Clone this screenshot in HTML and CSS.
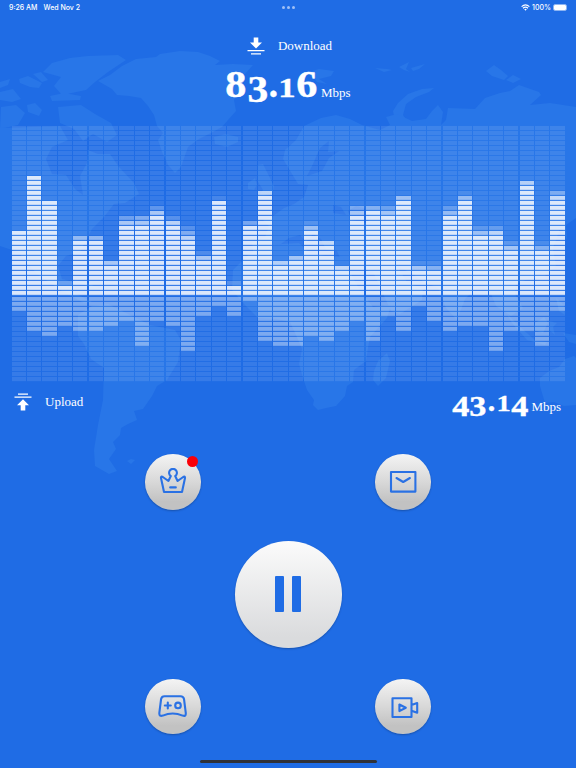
FILE: index.html
```html
<!DOCTYPE html>
<html lang="en">
<head>
    <meta charset="UTF-8">
    <meta name="viewport" content="width=device-width, initial-scale=1.0">
    <title>Speed Test</title>
    <link rel="stylesheet" href="styles.css">
</head>
<body>
    <svg class="map" viewBox="0 0 576 768">
        <!-- canadian arctic -->
        <path d="M0 82l10-3-2 6-8 3zM0 92l13-3 8 10-9 3-12-2zM19 79l9-3 14 7-3 5-9-1-10-4zM33 74l8-2 7 8-6 2zM43 72l9-9 18-5 18-2 30-1 8 5-18 12-13 10-9 8-24 5-8-9 7-9zM50 96l14-3 17 3-1 4-28 1zM1 107l15-2 9 8-7 12-18 4zM27 105l8-2 7 7-3 6-11-4zM58 107l23-2 14 9 16 9 6 12-10 7-14-8-10 7-9-12-14-6z"/>
        <!-- north america -->
        <path d="M0 128L60 126 68 140 52 147 46 159 52 174 66 175 75 189 83 195 80 176 87 163 88 150 98 154 110 154 119 167 134 183 139 194 125 203 114 204 104 217 92 229 86 241 80 252 66 256 58 266 62 279 74 282 73 292 92 302 84 303 60 290 36 273 18 252 0 246Z"/>
        <!-- greenland -->
        <path d="M98 81l12-6 12-9 14-7 20-2 4-3 20-3 18 1 12 4 10 5-5 4 18-1 20 1-8 9-8 4 2 12-5 10 2 11-8 9-6 7-11 6-12 6-11 8-7 20-6 6-7-8-6-13-4-12 5-7-6-7-3-11-6-9-7-8-12-2-12-1-5-6z"/>
        <!-- south america -->
        <path d="M78 315L92 306 108 304 130 315 150 325 175 330 181 340 178 362 167 380 157 386 152 396 143 409 134 411 137 420 128 424 121 428 120 435 113 442 116 449 109 459 117 471 109 474 95 466 94 450 98 425 103 400 104 368 91 359 84 344 78 336Z"/>
        <path d="M127 461l4-2 4 1-4 4zM74 280l14 3 12 6-11-2z"/>
        <!-- iceland and the northern islands -->
        <path d="M214 137l12-3 12 3 0 5-11 5-12-3zM309 72l10-3 15 2-3 5-12 3 8 5-10-2zM375 68l12 1 5 1-8 2zM399 67l10-5-3 7 4 3-6-2zM411 68l14-4-6 5-6 2z"/>
        <path d="M393 111l5-8 10-9 14-5 12-1-5 4-13 5-10 7-3 11 4 6-9-2-4-3zM486 71l8-6 7 5 7 6-4 4-12-4zM506 80l7-5 8 4-8 4z"/>
        <!-- europe and asia -->
        <path d="M283 159L285 150 296 140 304 126 321 118 336 115 350 119 362 125 380 130 390 125 386 117 397 114 412 121 426 119 432 111 438 105 443 112 441 125 446 120 448 108 475 109 485 98 500 93 510 91 519 85 539 92 541 95 530 105 550 103 576 107V218L566 225 567 240 561 226 553 248 556 266 544 277 528 279 516 284 515 294 523 308 511 316 496 306 491 294 483 286 474 290 465 299 457 320 446 308 438 288 424 282 411 273 397 266 407 282 423 289 422 300 400 314 391 311 380 287 373 272 362 269 348 267 341 260 337 251 326 250 321 239 313 234 306 242 300 235 289 238 277 247 268 260 254 258 252 243 265 237 269 226 263 220 273 216 284 208 294 204 304 197 308 185 298 184Z"/>
        <path d="M258 165l5-1 4 8 7 14-2 9-15 2 6-7-5-8zM248 183l7-5 2 7-3 5-6-1z"/>
        <!-- africa -->
        <path d="M248 255L262 248 282 244 299 243 310 253 326 256 343 257 351 274 361 292 373 307 391 305 387 318 370 337 368 348 366 361 354 370 353 382 347 386 345 396 336 406 326 408 318 410 313 405 314 400 307 390 303 378 299 364 302 349 296 335 290 322 277 319 258 318 245 305 232 290 233 270Z"/>
        <path d="M374 371l4-10 9-8 3 8-4 17-8 8-5-6z"/>
        <!-- oceania -->
        <path d="M540 378l9-7 10-4 6-8 9-3 2 2v47l-12 1-10-4-9 1-5-17zM507 314l12 12 17 15 11 1-2 3-18-5-15-17zM535 323l9-6 4 6-5 10-9-3zM549 321l8 2-4 4 2 8-6-5zM563 333l13 2v9l-7-2zM556 298l8 7 1 10-6-4z"/>
        <path class="sea" d="M307 176l6-12 7-16 9-7-1 11 11-1-10 7-7 13zM348 211l8-5 8 2 7 10-5 5-14-3zM333 205l8 2 5 8-13-2z"/>
    </svg>

    <div class="screen">
        <header class="status">
            <div class="status-left"><span>9:26 AM</span><span>Wed Nov 2</span></div>
            <div class="dots"><i></i><i></i><i></i></div>
            <div class="status-right">
                <svg width="9" height="7" viewBox="0 0 9 7" fill="none" stroke="#fff" stroke-width="1.2">
                    <path d="M.6 2.6Q4.5-.9 8.4 2.6M2 4.2Q4.5 2 7 4.2"/>
                    <path d="M3.2 5.2Q4.5 4.2 5.8 5.2L4.5 6.7Z" fill="#fff" stroke="none"/>
                </svg>
                <span>100%</span>
                <div class="battery"><b></b></div>
            </div>
        </header>

        <section class="download">
            <div class="label">
                <svg width="18" height="18" viewBox="0 0 18 18" fill="#fff">
                    <path d="M6.7 .5h4.6v5H15L9 11.5 3 5.5h3.7zM.5 13h17v1.3H.5zM4 16.2h10v1.3H4z"/>
                </svg>
                <span>Download</span>
            </div>
            <div class="speed">
                <div class="number"><span>8</span><span class="low">3</span><span class="dot">.</span><span class="small">1</span><span>6</span></div>
                <span class="unit">Mbps</span>
            </div>
        </section>

        <div class="chart" id="chart"></div>

        <section class="upload">
            <div class="label">
                <svg width="18" height="18" viewBox="0 0 18 18" fill="#fff">
                    <path d="M4 .5h10v1.3H4zM.5 3.5h17v1.3H.5zM9 6.3l6 6h-3.7V17.500H6.700v-5.200H3z"/>
                </svg>
                <span>Upload</span>
            </div>
            <div class="speed">
                <div class="number"><span class="low">4</span><span class="low">3</span><span class="dot">.</span><span class="small">1</span><span class="low">4</span></div>
                <span class="unit">Mbps</span>
            </div>
        </section>

        <main class="controls">
            <div class="row">
                <button class="round" aria-label="Premium">
                    <svg width="28" height="28" viewBox="0 0 28 28">
                        <path d="M5 24L2 10Q1.900 8 3.800 9L9.400 13 11.800 8A3.900 3.900 0 1 1 16.200 8L18.600 13 24.200 9Q26.100 8 26 10L23 24ZM11.200 19.400h5.600"/>
                    </svg>
                    <span class="badge"></span>
                </button>
                <button class="round" aria-label="Mail">
                    <svg width="28" height="28" viewBox="0 0 28 28">
                        <path d="M2 4h24.400v19.600H2zM7.500 10l6.700 4 6.700-4"/>
                    </svg>
                </button>
            </div>
            <button class="pause" aria-label="Pause"><i></i><i></i></button>
            <div class="row">
                <button class="round" aria-label="Games">
                    <svg width="30" height="28" viewBox="0 0 30 28">
                        <path d="M6.500 4.300H22.500Q25.400 4.300 26 7L27.800 21.200Q28 24.700 24.600 23.600 14.700 19.500 4.800 23.600 1.200 24.700 1.300 21.200L3.100 7Q3.800 4.300 6.500 4.300ZM9.800 10.500v6M6.800 13.500h6"/>
                        <circle cx="20" cy="13.400" r="2.800"/>
                    </svg>
                </button>
                <button class="round" aria-label="Video">
                    <svg width="28" height="28" viewBox="0 0 28 28" class="video">
                        <path d="M1.500 6.200h19V25h-19zM8.400 12.500v6.600l6.400-3.300zM20.500 13.100l5.700-2v9.600l-5.700-2z"/>
                    </svg>
                </button>
            </div>
        </main>
        <div class="home-bar"></div>
    </div>

    <script src="chart.js"></script>
</body>
</html>
```

FILE: styles.css
```css
* {
    box-sizing: border-box;
}

body {
    margin: 0;
    width: 576px;
    height: 768px;
    overflow: hidden;
    background-color: #1f6ce5;
    color: white;
    font-family: 'Liberation Serif', serif;
}

.map {
    position: absolute;
    top: 0;
    left: 0;
    width: 576px;
    height: 768px;
    fill: #2876e8;
}

.map .sea {
    fill: #1f6ce5;
}

.screen {
    position: relative;
    height: 768px;
    display: flex;
    flex-direction: column;
}

.status {
    height: 14px;
    padding: 0 9px;
    display: grid;
    grid-template-columns: 1fr auto 1fr;
    align-items: center;
    font: 500 7px Inter, sans-serif;
}

.status-left,
.status-right {
    display: flex;
    align-items: center;
    gap: 6px;
}

.status-right {
    justify-content: flex-end;
    gap: 2px;
}

.dots {
    display: flex;
    gap: 2px;
}

.dots i {
    width: 3px;
    height: 3px;
    border-radius: 50%;
    background: #a0c0f5;
}

.battery {
    width: 14px;
    height: 7px;
    border: 1px solid #8db4f2;
    border-radius: 2px;
}

.battery b {
    display: block;
    height: 100%;
    background: white;
    border-radius: 1px;
}

.download {
    height: 112px;
    padding-top: 22px;
    display: flex;
    flex-direction: column;
    align-items: center;
}

.label {
    display: flex;
    align-items: center;
    font-size: 13px;
}

.label span {
    line-height: 19px;
}

.label svg {
    margin-right: 13px;
}

.download .label {
    padding-left: 3px;
}

.speed {
    display: flex;
    align-items: baseline;
    font-size: 13px;
}

.number {
    display: flex;
    font-weight: bold;
    font-size: 37px;
    line-height: 40px;
    margin-right: 3px;
    -webkit-text-stroke: 0.4px white;
}

.number span {
    width: 21.5px;
    display: flex;
    justify-content: center;
    transform: scaleX(1.14);
}

.number .low {
    transform: translateY(5px) scaleX(1.12);
}

.number .small {
    width: 18px;
    transform: translateY(3px) scale(0.94, 0.76);
}

.number .dot {
    width: 10px;
    transform: none;
}

.download .speed {
    padding-top: 10px;
}

.chart {
    height: 255px;
    margin: 0 10.2px 0 11.6px;
    display: grid;
    grid-template-columns: repeat(36, 1fr);
}

.column {
    padding-right: 1.2px;
}

.up,
.down {
    display: flex;
    flex-direction: column;
    background: linear-gradient(rgba(255, 255, 255, 0.1) 4px, rgba(255, 255, 255, 0.01) 4px) 0 0 / 100% 5px;
}

.up {
    height: 170px;
    justify-content: flex-end;
}

.down {
    height: 85px;
    margin-top: 1px;
}

.bar {
    background: linear-gradient(rgba(255, 255, 255, 0.82) 3px, rgba(255, 255, 255, 0.68) 3px 4px, rgba(255, 255, 255, 0.1) 4px) 0 0 / 100% 5px;
}

.down .bar {
    background: linear-gradient(rgba(255, 255, 255, 0.35) 3px, rgba(255, 255, 255, 0.28) 3px 4px, rgba(255, 255, 255, 0.05) 4px) 0 0 / 100% 5px;
}

.upload {
    height: 56px;
    padding: 4px 15px 0 14px;
    display: flex;
    justify-content: space-between;
    align-items: flex-start;
}

.upload .label {
    margin-top: 7px;
}

.upload .number {
    font-size: 30px;
    line-height: 32px;
}

.upload .number span {
    width: 17.5px;
}

.upload .number .low {
    transform: translateY(5px) scaleX(1.14);
}

.upload .number .dot {
    width: 9px;
}

.upload .number .small {
    width: 15px;
    transform: translateY(2px) scale(0.95, 0.76);
}

.controls {
    padding-top: 17px;
    display: flex;
    flex-direction: column;
    align-items: center;
    gap: 31px;
}

.row {
    width: 286px;
    display: flex;
    justify-content: space-between;
}

button {
    position: relative;
    padding: 0;
    border: none;
    border-radius: 50%;
    display: flex;
    align-items: center;
    justify-content: center;
    box-shadow: 0 1px 2px rgba(0, 0, 0, 0.25);
}

.round {
    width: 56px;
    height: 55.5px;
    background: linear-gradient(#f4f4f4, #d8d8d8 50%, #c2c2c2 85%);
}

.round svg {
    fill: none;
    stroke: #2a71e4;
    stroke-width: 2.1;
    stroke-linejoin: round;
    stroke-linecap: round;
}

.round .video {
    margin-left: 4px;
}

.badge {
    position: absolute;
    top: 2px;
    right: 3px;
    width: 11px;
    height: 11px;
    border-radius: 50%;
    background: #f90009;
}

.pause {
    width: 107px;
    height: 107px;
    gap: 8px;
    background: linear-gradient(#fbfbfb, #dadbdd 90%);
}

.pause i {
    width: 9px;
    height: 36px;
    border-radius: 1px;
    background: #1f6ce5;
}

.home-bar {
    width: 177px;
    height: 3px;
    margin: auto auto 5px;
    border-radius: 2px;
    background: #303238;
}
```

FILE: chart.js
```js
const chart = document.getElementById('chart');

// full rows, followed by the opacity of each fading row above
const download = [
    [13], [24], [19], [2, 0.3], [11, 0.55], [11, 0.55],
    [6, 0.7], [14, 0.7, 0.35], [14, 0.7, 0.45], [16, 0.7, 0.25], [14, 0.8, 0.2], [11, 0.8, 0.45, 0.2],
    [7, 0.7, 0.15], [18, 1, 0.1], [2, 0.2], [14, 0.4], [20, 0.8], [6, 0.75],
    [7, 0.65], [13, 0.6, 0.15], [10, 0.85], [5, 0.85], [16, 0.7, 0.4], [17, 0.45],
    [16, 0.65, 0.3], [19, 0.6], [5, 0.65, 0.1], [5, 0.45, 0.1], [16, 0.55, 0.25], [19, 0.55, 0.08],
    [12, 0.6, 0.2], [12, 0.8, 0.25], [9, 0.65, 0.2], [22, 0.75], [9, 0.45, 0.08], [19, 0.85, 0.4]
];
const upload = [
    3, 7, 8, 6, 7, 7, 6, 5, 10, 5, 6, 11,
    4, 2, 4, 1, 9, 10, 10, 8, 9, 7, 5, 9,
    4, 7, 2, 5, 7, 6, 6, 11, 7, 7, 10, 3
];

function addBar(parent, rows, opacity) {
    const bar = document.createElement('div');
    bar.className = 'bar';
    bar.style.height = `${rows * 5}px`;
    bar.style.opacity = opacity;
    parent.appendChild(bar);
}

download.forEach(([rows, ...peaks], index) => {
    const column = document.createElement('div');
    const up = document.createElement('div');
    const down = document.createElement('div');
    column.className = 'column';
    up.className = 'up';
    down.className = 'down';

    peaks.reverse().forEach(opacity => addBar(up, 1, opacity));
    addBar(up, rows, 1);
    addBar(down, upload[index], 1);

    column.append(up, down);
    chart.appendChild(column);
});
```
